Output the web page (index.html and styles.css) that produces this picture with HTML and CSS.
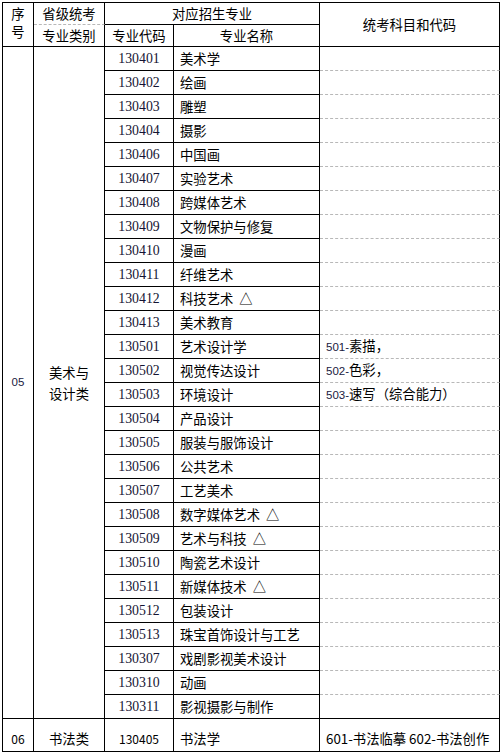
FILE: index.html
```html
<!DOCTYPE html>
<html lang="zh-CN">
<head>
<meta charset="utf-8">
<title>统考专业对照表</title>
<link rel="stylesheet" href="styles.css">
</head>
<body>
<div class="sheet">
<table class="plan">
<colgroup>
<col class="c-no"><col class="c-cat"><col class="c-code"><col class="c-name"><col class="c-exam">
</colgroup>
<thead>
<tr class="h-row">
<th rowspan="2" class="no-head">序<br>号</th>
<th class="cat-top">省级统考</th>
<th colspan="2">对应招生专业</th>
<th rowspan="2">统考科目和代码</th>
</tr>
<tr class="h-row">
<th>专业类别</th>
<th>专业代码</th>
<th>专业名称</th>
</tr>
</thead>
<tbody>
<tr class="d-row"><td rowspan="28" class="num">05</td><td rowspan="28" class="cat">美术与<br>设计类</td><td class="code">130401</td><td class="name">美术学</td><td class="exam"></td></tr>
<tr class="d-row"><td class="code">130402</td><td class="name">绘画</td><td class="exam"></td></tr>
<tr class="d-row"><td class="code">130403</td><td class="name">雕塑</td><td class="exam"></td></tr>
<tr class="d-row"><td class="code">130404</td><td class="name">摄影</td><td class="exam"></td></tr>
<tr class="d-row"><td class="code">130406</td><td class="name">中国画</td><td class="exam"></td></tr>
<tr class="d-row"><td class="code">130407</td><td class="name">实验艺术</td><td class="exam"></td></tr>
<tr class="d-row"><td class="code">130408</td><td class="name">跨媒体艺术</td><td class="exam"></td></tr>
<tr class="d-row"><td class="code">130409</td><td class="name">文物保护与修复</td><td class="exam"></td></tr>
<tr class="d-row"><td class="code">130410</td><td class="name">漫画</td><td class="exam"></td></tr>
<tr class="d-row"><td class="code">130411</td><td class="name">纤维艺术</td><td class="exam"></td></tr>
<tr class="d-row"><td class="code">130412</td><td class="name">科技艺术<span class="tri">△</span></td><td class="exam"></td></tr>
<tr class="d-row"><td class="code">130413</td><td class="name">美术教育</td><td class="exam"></td></tr>
<tr class="d-row"><td class="code">130501</td><td class="name">艺术设计学</td><td class="exam"><span class="lat">501-</span>素描，</td></tr>
<tr class="d-row"><td class="code">130502</td><td class="name">视觉传达设计</td><td class="exam"><span class="lat">502-</span>色彩，</td></tr>
<tr class="d-row"><td class="code">130503</td><td class="name">环境设计</td><td class="exam"><span class="lat">503-</span>速写（综合能力）</td></tr>
<tr class="d-row"><td class="code">130504</td><td class="name">产品设计</td><td class="exam"></td></tr>
<tr class="d-row"><td class="code">130505</td><td class="name">服装与服饰设计</td><td class="exam"></td></tr>
<tr class="d-row"><td class="code">130506</td><td class="name">公共艺术</td><td class="exam"></td></tr>
<tr class="d-row"><td class="code">130507</td><td class="name">工艺美术</td><td class="exam"></td></tr>
<tr class="d-row"><td class="code">130508</td><td class="name">数字媒体艺术<span class="tri">△</span></td><td class="exam"></td></tr>
<tr class="d-row"><td class="code">130509</td><td class="name">艺术与科技<span class="tri">△</span></td><td class="exam"></td></tr>
<tr class="d-row"><td class="code">130510</td><td class="name">陶瓷艺术设计</td><td class="exam"></td></tr>
<tr class="d-row"><td class="code">130511</td><td class="name">新媒体技术<span class="tri">△</span></td><td class="exam"></td></tr>
<tr class="d-row"><td class="code">130512</td><td class="name">包装设计</td><td class="exam"></td></tr>
<tr class="d-row"><td class="code">130513</td><td class="name">珠宝首饰设计与工艺</td><td class="exam"></td></tr>
<tr class="d-row"><td class="code">130307</td><td class="name">戏剧影视美术设计</td><td class="exam"></td></tr>
<tr class="d-row"><td class="code">130310</td><td class="name">动画</td><td class="exam"></td></tr>
<tr class="d-row"><td class="code">130311</td><td class="name">影视摄影与制作</td><td class="exam exam-end"></td></tr>
<tr class="last-row"><td class="cjk-num">06</td><td>书法类</td><td class="cjk-num">130405</td><td class="name">书法学</td><td class="exam exam-end">601-书法临摹 602-书法创作</td></tr>
</tbody>
</table>
</div>
</body>
</html>
```
FILE: styles.css
```css
html, body {
  margin: 0;
  padding: 0;
  background: #ffffff;
}

.sheet {
  padding: 2px 0 0 2px;
}

.plan {
  border-collapse: separate;
  border-spacing: 0;
  table-layout: fixed;
  width: 498px;
  border-left: 1px solid #000;
  border-top: 1px solid #000;
  font-family: "Noto Sans CJK SC", "Noto Sans", sans-serif;
  font-size: 13.33px;
  color: #000;
}

.c-no { width: 31px; }
.c-cat { width: 71px; }
.c-code { width: 69px; }
.c-name { width: 146px; }
.c-exam { width: 180px; }

.plan th,
.plan td {
  padding: 0;
  border-right: 1px solid #000;
  border-bottom: 1px solid #000;
  font-weight: normal;
  text-align: center;
  vertical-align: middle;
  line-height: 17px;
  white-space: nowrap;
  overflow: hidden;
}

.h-row { height: 22px; }
.d-row { height: 24px; }
.last-row { height: 33px; }

.plan .no-head {
  line-height: 18px;
  padding-bottom: 3px;
}

.plan .cat-top {
  border-bottom: 1px dashed #b8b8b8;
}

.plan .cat {
  line-height: 21px;
}

.plan .num {
  font-family: "Liberation Sans", Arial, sans-serif;
  font-size: 11.5px;
  color: #1a1a40;
}

.plan .code {
  font-family: "Liberation Serif", "Times New Roman", serif;
  font-size: 13.8px;
  color: #141432;
}

.plan .name {
  text-align: left;
  padding-left: 6px;
}

.tri {
  margin-left: 6px;
}

.plan .exam {
  text-align: left;
  padding-left: 6px;
  border-bottom: 1px dashed #b8b8b8;
}

.plan .exam-end {
  border-bottom: 1px solid #000;
}

.lat {
  font-family: "Liberation Sans", Arial, sans-serif;
  font-size: 11.5px;
  color: #1a1a40;
}

.last-row td {
  vertical-align: bottom;
  line-height: 20px;
  padding-bottom: 2px;
}

.plan .cjk-num {
  font-family: "Noto Sans CJK SC", sans-serif;
  font-size: 12px;
}
```
